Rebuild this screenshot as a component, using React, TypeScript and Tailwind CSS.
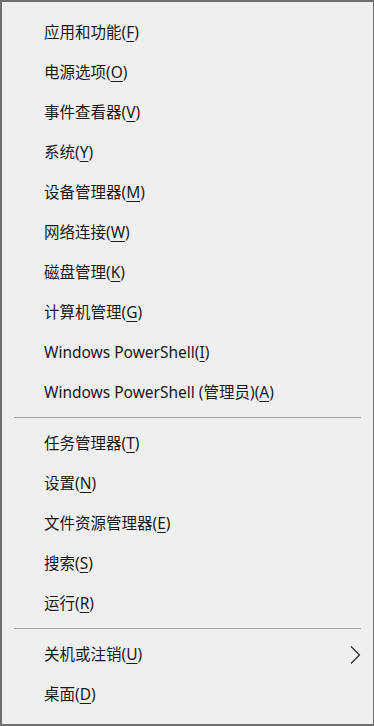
const groups: { label: string; key: string; submenu?: boolean }[][] = [
  [
    { label: "应用和功能", key: "F" },
    { label: "电源选项", key: "O" },
    { label: "事件查看器", key: "V" },
    { label: "系统", key: "Y" },
    { label: "设备管理器", key: "M" },
    { label: "网络连接", key: "W" },
    { label: "磁盘管理", key: "K" },
    { label: "计算机管理", key: "G" },
    { label: "Windows PowerShell", key: "I" },
    { label: "Windows PowerShell (管理员)", key: "A" },
  ],
  [
    { label: "任务管理器", key: "T" },
    { label: "设置", key: "N" },
    { label: "文件资源管理器", key: "E" },
    { label: "搜索", key: "S" },
    { label: "运行", key: "R" },
  ],
  [
    { label: "关机或注销", key: "U", submenu: true },
    { label: "桌面", key: "D" },
  ],
];

function MenuItem({ label, accel, submenu }: { label: string; accel: string; submenu?: boolean }) {
  return (
    <div className="flex h-10 items-center justify-between pl-[42px] pr-[12px]">
      <span className="whitespace-nowrap text-[15.5px] leading-none text-[#1a1a1a]">
        {label}(<span className="underline underline-offset-[3px] decoration-1">{accel}</span>)
      </span>
      {submenu && (
        <svg width="12" height="20" viewBox="0 0 12 20">
          <path d="M2 1.5 L10.5 10 L2 18.5" fill="none" stroke="#222" strokeWidth="1.1" />
        </svg>
      )}
    </div>
  );
}

export default function App() {
  return (
    <div
      className="h-[726px] w-[374px] overflow-hidden border-2 border-r border-[#6f6f6f] bg-[#efefef] pt-[11px]"
      style={{ fontFamily: '"Noto Sans", "Noto Sans CJK SC", sans-serif' }}
    >
      {groups.map((group, gi) => (
        <div key={gi}>
          {gi > 0 && <div className="mx-[12px] mb-[6px] mt-[4px] h-px bg-[#a3a3a3]" />}
          {group.map((item) => (
            <MenuItem key={item.key} label={item.label} accel={item.key} submenu={item.submenu} />
          ))}
        </div>
      ))}
    </div>
  );
}
